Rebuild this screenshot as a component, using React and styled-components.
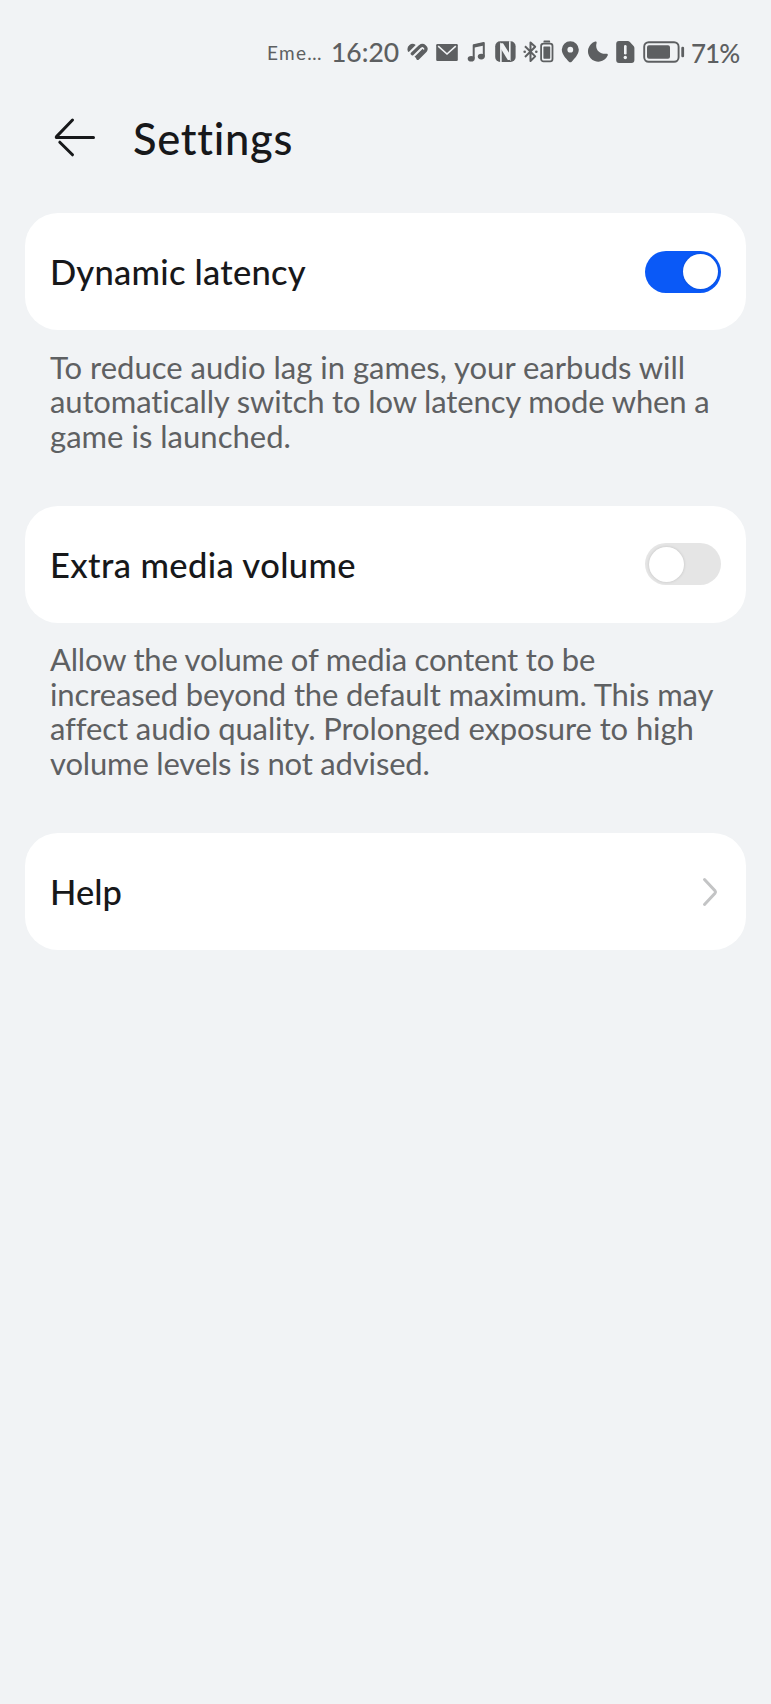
import { useState } from 'react';
import styled, { createGlobalStyle } from 'styled-components';

const GlobalStyle = createGlobalStyle`
  * {
    box-sizing: border-box;
  }

  body {
    margin: 0;
    background: #f1f3f5;
    font-family: Lato, 'Noto Sans', sans-serif;
  }
`;

function StatusIcons() {
  return (
    <>
      {/* health */}
      <Glyph $width={22} viewBox="0 0 22 24">
        <path d="M.8 11.200Q-.4 7.200 2.500 5T8.700 4.900L2.300 11.500Q1.400 12.400.8 11.200z" fill="#5d5f61" />
        <path
          d="M5.300 13.700 13 6.400Q15.400 4.400 17.700 6.400T18.300 10.900L10.800 18.300M9.300 16.200 15 10.500"
          fill="none"
          stroke="#5d5f61"
          strokeWidth="3.300"
          strokeLinecap="round"
          strokeLinejoin="round"
        />
        <path d="M7.600 15.800 14.700 8.800" stroke="#f1f3f5" strokeWidth="1.300" strokeLinecap="round" />
      </Glyph>
      {/* mail */}
      <Glyph $width={22} $gap={7} viewBox="0 0 22 24">
        <rect x="0.2" y="4" width="21.6" height="17" rx="1.2" fill="#5d5f61" />
        <path d="M2.2 6.2 11 14l8.8-7.8" fill="none" stroke="#f1f3f5" strokeWidth="1.6" />
      </Glyph>
      {/* music */}
      <Glyph $width={19} $gap={9} viewBox="0 0 19 24">
        <path d="M6.7 18.5V5.2L16.8 3v13.4" fill="none" stroke="#5d5f61" strokeWidth="2" strokeLinejoin="round" />
        <path d="M6.5 4.8 17 2.6v3L6.5 7.8z" fill="#5d5f61" />
        <ellipse cx="4.2" cy="18.7" rx="3.5" ry="2.8" fill="#5d5f61" />
        <ellipse cx="14.3" cy="16.6" rx="3.5" ry="2.8" fill="#5d5f61" />
      </Glyph>
      {/* nfc */}
      <Glyph $width={21} $gap={9} viewBox="0 0 21 24">
        <rect x="0.2" y="1.3" width="20.4" height="20.6" rx="5" fill="#5d5f61" />
        <path d="M5.900 22V5L14.800 18.500V1.200" fill="none" stroke="#f1f3f5" strokeWidth="1.600" />
        <path d="M5.900 3.200H8L14.800 14V20H12.800L5.900 8.800z" fill="#f1f3f5" />
      </Glyph>
      {/* bluetooth */}
      <Glyph $width={15} $gap={7} viewBox="0 0 15 24">
        <path d="M2 6.3 12.2 16.4 7.5 21V2.4l4.7 4.4L2 17" fill="none" stroke="#5d5f61" strokeWidth="2" strokeLinejoin="round" />
        <circle cx="1.7" cy="11.7" r="1.3" fill="#5d5f61" />
        <circle cx="13.300" cy="11.7" r="1.3" fill="#5d5f61" />
      </Glyph>
      {/* earbuds battery */}
      <Glyph $width={14} $gap={2} viewBox="0 0 14 24">
        <rect x="3.500" y="0.6" width="6.6" height="2" rx="0.6" fill="#5d5f61" />
        <rect x="1.1" y="3.7" width="11.4" height="17.6" rx="2.4" fill="none" stroke="#5d5f61" strokeWidth="1.8" />
        <rect x="3.4" y="6.500" width="6.8" height="12.200" rx="0.6" fill="#5d5f61" />
      </Glyph>
      {/* location */}
      <Glyph $width={19} $gap={7} viewBox="0 0 19 24">
        <path
          d="M9.3 1.2a8.5 8.5 0 0 0-8.5 8.4c0 4.8 4.2 9 7.1 12.1q1.4 1.3 2.8 0c2.9-3.1 7.1-7.3 7.1-12.1a8.5 8.5 0 0 0-8.5-8.4zm0 5.6a2.9 2.9 0 1 1 0 5.8 2.9 2.9 0 0 1 0-5.8z"
          fill="#5d5f61"
          fillRule="evenodd"
        />
      </Glyph>
      {/* do not disturb */}
      <Glyph $width={20} $gap={8} viewBox="0 0 20 24">
        <path d="M7.2 1.5C8.1 1.1 8.9 2 8.6 2.9 6.7 9.3 11.6 14.4 18.4 13.7c1.1-.1 1.8.8 1.3 1.8A10.3 10.3 0 1 1 7.2 1.5z" fill="#5d5f61" />
      </Glyph>
      {/* sim alert */}
      <Glyph $width={19} $gap={8} viewBox="0 0 19 24">
        <path d="M3 1h8.7q1.3 0 2.2 1l3.7 4q.8.9.8 2v12q0 2.9-2.9 2.9H3Q.2 22.9.2 20V3.9Q.2 1 3 1z" fill="#5d5f61" />
        <path d="M9.3 6.3v7" stroke="#f1f3f5" strokeWidth="2.6" strokeLinecap="round" />
        <circle cx="9.3" cy="17.5" r="1.7" fill="#f1f3f5" />
      </Glyph>
      {/* phone battery */}
      <Glyph $width={42} $gap={8} viewBox="0 0 42 24">
        <rect x="1.2" y="2.2" width="34.4" height="19.6" rx="4.5" fill="none" stroke="#5d5f61" strokeWidth="1.9" />
        <rect x="4" y="5.2" width="23" height="13.6" rx="2" fill="#5d5f61" />
        <rect x="38.3" y="6.8" width="2.8" height="10.4" rx="1.2" fill="#5d5f61" />
      </Glyph>
    </>
  );
}

function SwitchRow({ title, tracking, defaultOn, children }) {
  const [on, setOn] = useState(defaultOn);

  return (
    <Section>
      <Card>
        <CardTitle $tracking={tracking}>{title}</CardTitle>
        <Switch role="switch" aria-checked={on} aria-label={title} $on={on} onClick={() => setOn(!on)}>
          <Knob />
        </Switch>
      </Card>
      <Description>{children}</Description>
    </Section>
  );
}

export default function App() {
  return (
    <>
      <GlobalStyle />
      <Screen>
        <StatusBar>
          <Carrier>Eme…</Carrier>
          <Clock>16:20</Clock>
          <StatusIcons />
          <Percent>71%</Percent>
        </StatusBar>
        <Header>
          <BackButton aria-label="Back">
            <svg width="48" height="44" viewBox="0 0 48 44" fill="none" stroke="#17181a" strokeWidth="3" strokeLinecap="round" strokeLinejoin="round">
              <path d="M22.5 5 6.5 21.6q-.8 1 .7 1H43.5M9.8 27.2 22.5 39.8" />
            </svg>
          </BackButton>
          <PageTitle>Settings</PageTitle>
        </Header>
        <SwitchRow title="Dynamic latency" tracking={0.24} defaultOn>
          <Line $tracking={0}>To reduce audio lag in games, your earbuds will</Line>
          <Line $tracking={-0.13}>automatically switch to low latency mode when a</Line>
          <Line $tracking={0.02}>game is launched.</Line>
        </SwitchRow>
        <SwitchRow title="Extra media volume" tracking={0.38} defaultOn={false}>
          <Line $tracking={-0.19}>Allow the volume of media content to be</Line>
          <Line $tracking={-0.13}>increased beyond the default maximum. This may</Line>
          <Line $tracking={-0.11}>affect audio quality. Prolonged exposure to high</Line>
          <Line $tracking={-0.17}>volume levels is not advised.</Line>
        </SwitchRow>
        <Card>
          <CardTitle>Help</CardTitle>
          <Chevron width="22" height="32" viewBox="0 0 22 32">
            <path d="M5.500 3.500 16 14.800q1 1.200 0 2.400L5.500 28.500" />
          </Chevron>
        </Card>
      </Screen>
    </>
  );
}

const Screen = styled.main`
  min-height: 1704px;
  padding: 0 25px;
  background: #f1f3f5;
`;

const StatusBar = styled.div`
  display: flex;
  align-items: center;
  height: 104px;
  padding-left: 242px;
  color: #5d5f61;
  line-height: 1;
  white-space: nowrap;
`;

const Carrier = styled.span`
  width: 64px;
  padding-top: 1px;
  font-size: 19px;
  letter-spacing: 1.3px;
`;

const Clock = styled.span`
  width: 76px;
  padding-top: 1px;
  font-size: 26.5px;
  font-weight: 500;
`;

const Percent = styled.span`
  margin-left: 6px;
  padding-top: 1px;
  font-size: 26px;
  font-weight: 500;
  letter-spacing: -1px;
`;

const Glyph = styled.svg`
  flex: none;
  width: ${({ $width }) => $width}px;
  height: 24px;
  margin-left: ${({ $gap }) => $gap || 0}px;
`;

const Header = styled.header`
  display: flex;
  align-items: center;
  height: 66px;
  margin-bottom: 43px;
  padding-left: 25px;
`;

const BackButton = styled.button`
  display: flex;
  padding: 0;
  border: none;
  background: none;
  cursor: pointer;
`;

const PageTitle = styled.h1`
  margin: 2px 0 0 35px;
  color: #17181a;
  font-size: 43.5px;
  font-weight: 500;
  letter-spacing: 0.7px;
  line-height: 1.2;
`;

const Section = styled.section`
  margin-bottom: 52.5px;
`;

const Card = styled.div`
  display: flex;
  align-items: center;
  justify-content: space-between;
  height: 117px;
  padding: 0 25px;
  border-radius: 33px;
  background: #fff;
`;

const CardTitle = styled.h2`
  margin: 0;
  color: #17181a;
  font-size: 34.5px;
  font-weight: 500;
  letter-spacing: ${({ $tracking }) => $tracking || 0}px;
  line-height: 1.2;
`;

const Switch = styled.button`
  display: flex;
  align-items: center;
  justify-content: ${({ $on }) => ($on ? 'flex-end' : 'flex-start')};
  width: 76px;
  height: 42px;
  padding: 0 3.5px;
  border: none;
  border-radius: 21px;
  background: ${({ $on }) => ($on ? '#0a59f7' : '#e5e5e5')};
  cursor: pointer;
`;

const Knob = styled.span`
  width: 35px;
  height: 35px;
  border-radius: 50%;
  background: #fff;
  box-shadow: 0 0 3px rgba(0, 0, 0, 0.16);
`;

const Description = styled.p`
  margin: 0;
  padding: 19.5px 25px 0;
  color: #5e6062;
  font-size: 31px;
  line-height: 34.6px;
`;

const Line = styled.span`
  display: block;
  letter-spacing: ${({ $tracking }) => $tracking}px;
  white-space: nowrap;
`;

const Chevron = styled.svg`
  fill: none;
  stroke: #c3c4c5;
  stroke-width: 3;
  stroke-linecap: round;
`;
